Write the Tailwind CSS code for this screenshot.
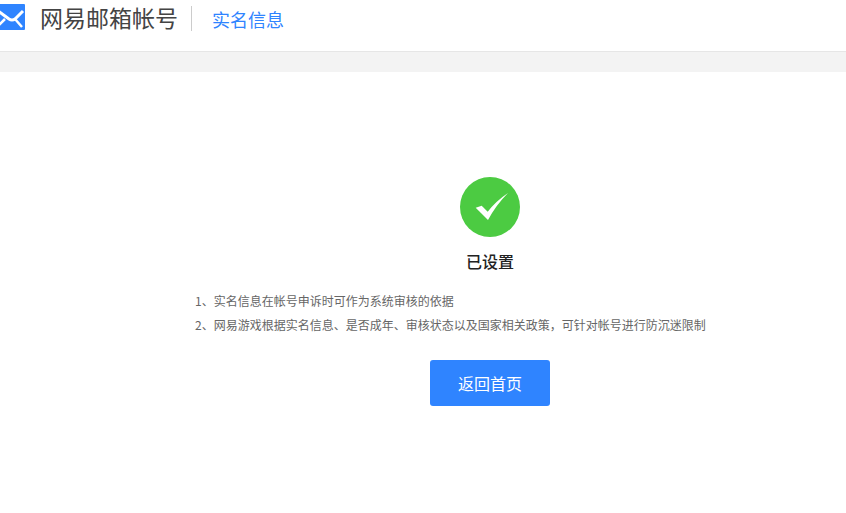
<!DOCTYPE html>
<html>
  <head>
    <meta charset="utf-8" />
    <title>实名信息</title>
    <script src="https://cdn.jsdelivr.net/npm/@tailwindcss/browser@4"></script>
  </head>
  <body class="bg-white overflow-hidden font-['Noto_Sans_CJK_SC',sans-serif]">
    <!-- top bar -->
    <header class="h-[52px] border-b border-[#e6e6e6] flex items-start">
      <svg class="w-[26px] h-[26px] mt-[4px] shrink-0" viewBox="0 0 26 26">
        <rect x="-8" y="0" width="33" height="26" rx="1" fill="#2f84ff" />
        <path d="M-6 4 L9 15 Q12 17 15 15 L23 7" fill="none" stroke="#fff" stroke-width="3" />
        <path d="M-3 23 L5 15 M22 23 L15 15" fill="none" stroke="#fff" stroke-width="2.5" />
      </svg>
      <span class="ml-[14px] mt-[2px] text-[23px] leading-[30px] w-[137px] whitespace-nowrap text-[#444]">网易邮箱帐号</span>
      <span class="ml-[14px] mt-[6px] w-px h-[25px] bg-[#ccc]"></span>
      <span class="ml-[20px] mt-[6px] text-[18px] leading-[26px] text-[#2f84ff]">实名信息</span>
    </header>
    <div class="h-[20px] bg-[#f3f3f3]"></div>

    <main class="flex flex-col items-center pl-[134px] pt-[105px]">
      <svg class="w-[60px] h-[60px]" viewBox="0 0 60 60">
        <circle cx="30" cy="30" r="30" fill="#4ccb42" />
        <path d="M15.7 30.7 L21.7 28.7 L27.7 34.7 Q36 24 48 16 Q36 28 28 43 Z" fill="#fff" />
      </svg>
      <h1 class="mt-[12px] text-[16px] leading-[24px] font-medium text-[#222]">已设置</h1>
      <ol class="mt-[16px] w-[590px] text-[12px] leading-[24px] text-[#666]">
        <li>1、实名信息在帐号申诉时可作为系统审核的依据</li>
        <li>2、网易游戏根据实名信息、是否成年、审核状态以及国家相关政策，可针对帐号进行防沉迷限制</li>
      </ol>
      <a class="mt-[23px] w-[120px] h-[46px] flex items-center justify-center rounded-[3px] bg-[#2f84ff] text-white text-[16px]">返回首页</a>
    </main>
  </body>
</html>
